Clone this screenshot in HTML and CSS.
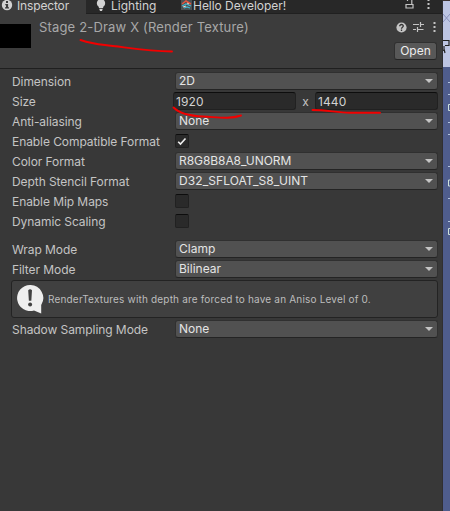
FILE: index.html
```html
<!DOCTYPE html>
<html lang="en">
<head>
<meta charset="utf-8">
<title>Inspector</title>
<link rel="stylesheet" href="styles.css">
</head>
<body>
<div class="window">
<main class="inspector">
  <nav class="tabs">
    <div class="tab active"><svg class="tab-icon" width="12" height="12" viewBox="0 0 12 12"><circle cx="6" cy="6" r="5.2" fill="#d2d2d2"/><path d="M5 2h2v2H5zM4.3 5h2.800v3.300H8v1.200H4V8.300h1V6.200H4.300z" fill="#3c3c3c"/></svg><span>Inspector</span></div>
    <div class="tab lighting"><svg class="tab-icon" width="12" height="13" viewBox="0 0 12 13"><path d="M6 0a4.200 4.200 0 0 0-2.500 7.500L4 9h4l.5-1.500A4.200 4.200 0 0 0 6 0zM4.200 9.800h3.600L7 12H5z" fill="#d2d2d2"/></svg><span>Lighting</span></div>
    <div class="tab hello"><svg class="tab-icon" width="11" height="10" viewBox="0 0 11 10"><path d="M0 0h11v10H0z" fill="#4b5153"/><path d="M1 4l4-3 5 3" stroke="#e2553f" stroke-width="1.500" fill="none"/><path d="M1 6l4-2 5 2M3 8l3-1 3 1" stroke="#45b7cf" stroke-width="1.300" fill="none"/><path d="M2 7l3-1M6 3l2 1" stroke="#f3d8cf"/></svg><span>Hello Developer!</span></div>
    <div class="tab-tools">
      <svg width="9" height="10" viewBox="0 0 9 10"><path d="M1 4.500h7v3.500H1zM2.500 1V0M6.800 4V0" fill="none" stroke="#c4c4c4" stroke-width="1.200"/></svg>
      <svg width="3" height="10" viewBox="0 0 3 10"><path d="M.5 0h2v1h-2zM.5 3h2v2h-2zM.5 7h2v2h-2z" fill="#c4c4c4"/></svg>
    </div>
  </nav>
  <header class="header">
    <div class="thumb"></div>
    <h1 class="title">Stage 2-Draw X (Render Texture)</h1>
    <div class="header-side">
      <div class="header-tools">
        <svg width="11" height="11" viewBox="0 0 11 11"><circle cx="5.500" cy="5.500" r="5.100" fill="#c4c4c4"/><path d="M3.700 4.300C3.700 1.800 7.400 2 7.300 4.100 7.300 5.300 5.500 5.300 5.500 6.800M5.500 7.500v1.400" fill="none" stroke="#333" stroke-width="1.300"/></svg>
        <svg width="11" height="10" viewBox="0 0 11 10"><path d="M0 2.500h6M8 2.500h3M7.500 0v5M0 7.500h3M5 7.500h5.500M4.500 5v5" fill="none" stroke="#c4c4c4" stroke-width="1.200"/></svg>
        <svg width="3" height="10" viewBox="0 0 3 10"><path d="M.5 0h2v2h-2zM.5 4h2v2h-2zM.5 8h2v2h-2z" fill="#c4c4c4"/></svg>
      </div>
      <button class="open">Open</button>
    </div>
  </header>
  <section class="props">
    <div class="row"><label>Dimension</label><div class="select">2D</div></div>
    <div class="row"><label>Size</label><div class="size"><div class="field">1920</div><span class="times">x</span><div class="field">1440</div></div></div>
    <div class="row"><label>Anti-aliasing</label><div class="select">None</div></div>
    <div class="row"><label>Enable Compatible Format</label><div class="check"><svg width="10" height="9" viewBox="0 0 10 9"><path d="M1.200 4.700l2.300 2.400 5-5.600" fill="none" stroke="#eee" stroke-width="1.600"/></svg></div></div>
    <div class="row"><label>Color Format</label><div class="select long">R8G8B8A8_UNORM</div></div>
    <div class="row"><label>Depth Stencil Format</label><div class="select longer">D32_SFLOAT_S8_UINT</div></div>
    <div class="row"><label>Enable Mip Maps</label><div class="check"></div></div>
    <div class="row"><label>Dynamic Scaling</label><div class="check"></div></div>
    <div class="row group"><label>Wrap Mode</label><div class="select">Clamp</div></div>
    <div class="row"><label>Filter Mode</label><div class="select">Bilinear</div></div>
    <div class="info">
      <svg width="27" height="29" viewBox="0 0 27 29"><path d="M13 0a13 13 0 1 0 4 25.400L24.200 28.400V20A13 13 0 0 0 13 0z" fill="#eee"/><path d="M11.200 5.200q1.900-2 3.800 0l-.7 10.600h-2.400z" fill="#404040"/><circle cx="13.100" cy="19.500" r="2" fill="#404040"/></svg>
      <p>RenderTextures with depth are forced to have an Aniso Level of 0.</p>
    </div>
    <div class="row"><label>Shadow Sampling Mode</label><div class="select">None</div></div>
  </section>
</main>
<aside class="desktop"><svg width="7" height="511" viewBox="0 0 7 511"><path d="M0 0h7v1H0z" fill="#3e3434"/><path d="M0 14l7 8M0 22l7-8" stroke="#8990bb" fill="none"/><path d="M0 40.500h6v5H2M0 50l2 1M1 46v3l1 4" stroke="#222" fill="none" stroke-width="1.200"/><path d="M5 82.500h2M5 94.500h2M5 122.500h2M5 134.500h2M5 166.500h2M5 198.500h2M5 221.500h2" stroke="#b5c6df"/><path d="M7 104.500H5.500v6H7M7 180H5.500v6H7M7 228.500H5.500v6H7" stroke="#cfe2dc" fill="none"/></svg></aside>
<svg class="marks" width="450" height="130" viewBox="0 0 450 130"><g fill="none" stroke="#f20000" stroke-width="1.900" stroke-linecap="round" stroke-linejoin="round"><path d="M80.500 40C88 42.500 95 44 105 45C125 47 145 51.500 172 51.500"/><path d="M173.500 107.500C180 114 190 116 203 116.500C218 117.200 229 119.500 241 115.500"/><path d="M312.500 110C326 110 337 112.500 350 112.700H380"/></g></svg>
</div>
</body>
</html>
```
FILE: styles.css
```css
* { box-sizing: border-box; }
body { margin: 0; background: #383838; font-family: Inter, "Liberation Sans", sans-serif; font-size: 12px; color: #c4c4c4; overflow: hidden; }
svg { display: block; flex: none; }
.window { position: relative; display: flex; width: 450px; height: 511px; }
.inspector { width: 443px; height: 511px; background: #383838; border-right: 1px solid #302f32; }
.tabs { display: flex; height: 14px; background: #282828; border-bottom: 1px solid #202020; }
.tab { display: flex; height: 13px; line-height: 12px; white-space: nowrap; color: #d2d2d2; font-size: 12px; }
.active { width: 86px; height: 14px; padding-left: 1px; background: #3c3c3c; }
.active span { margin-left: 4px; letter-spacing: -.15px; }
.active .tab-icon { margin-top: -1px; }
.lighting { width: 94px; padding-left: 9px; }
.lighting .tab-icon { margin-top: -1px; }
.lighting span { margin-left: 4px; }
.hello span { margin-left: 1px; letter-spacing: -.03px; }
.hello .tab-icon { margin-left: 1px; }
.tab-tools { display: flex; gap: 13px; margin-left: auto; padding-right: 13px; }
.tab-tools { padding-right: 12px; }
.header { display: flex; height: 55px; background: #3c3c3c; border-bottom: 1px solid #1f1f1f; }
.thumb { width: 31px; height: 24px; margin-top: 10px; background: #000; }
.title { margin: 4px 0 0 8px; font-size: 13px; line-height: 18px; font-weight: 400; color: #a8a8a8; white-space: nowrap; letter-spacing: .17px; }
.header-side { display: flex; flex-direction: column; align-items: flex-end; margin-left: auto; padding: 8px 5px 0 0; }
.header-tools { display: flex; gap: 6px; height: 11px; }
.header-tools svg:last-child { margin-left: 3px; margin-right: 1px; }
.open { width: 43px; height: 18px; margin-top: 9px; padding: 0; background: #585858; border: 1px solid #303030; border-bottom-color: #242424; border-radius: 3px; color: #eee; font: 12px/16px Inter, sans-serif; }
.props { padding: 2px 4px 0 12px; }
.row { display: flex; align-items: center; height: 20px; }
.group { margin-top: 8px; }
.row label { width: 163px; line-height: 18px; margin-top: 1px; flex: none; white-space: nowrap; letter-spacing: -.07px; }
.select { position: relative; width: 263px; height: 18px; padding-left: 3px; line-height: 16px; background: #515151; border: 1px solid #303030; border-bottom-color: #242424; border-radius: 3px; color: #e4e4e4; }
.long { letter-spacing: -.07px; }
.longer { letter-spacing: .08px; }
.select::after { content: ""; position: absolute; right: 4px; top: 6px; border: 4px solid transparent; border-top: 4px solid #c4c4c4; border-bottom: 0; }
.size { display: flex; align-items: center; margin-left: -2px; }
.field { width: 123px; height: 18px; padding-left: 2px; line-height: 17px; letter-spacing: .1px; background: #2a2a2a; border: 1px solid #212121; border-top-color: #0d0d0d; border-radius: 3px; color: #d2d2d2; }
.times { width: 19px; text-align: center; }
.check { display: flex; align-items: center; justify-content: center; width: 14px; height: 14px; background: #2a2a2a; border: 1px solid #212121; border-top-color: #0d0d0d; border-radius: 2px; }
.info { display: flex; align-items: flex-start; width: 427px; height: 38px; margin: 1px 0 1px -1px; padding: 4px 5px; background: #404040; border: 1px solid #232323; border-radius: 3px; }
.info p { margin: 7px 0 0 4px; font-size: 10px; line-height: 14px; white-space: nowrap; color: #bdbdbd; letter-spacing: .18px; }
.desktop { width: 7px; height: 511px; background: linear-gradient(#bdc5e3 67px, #4f5d8d 67px); }
.marks { position: absolute; left: 0; top: 0; pointer-events: none; }
```
